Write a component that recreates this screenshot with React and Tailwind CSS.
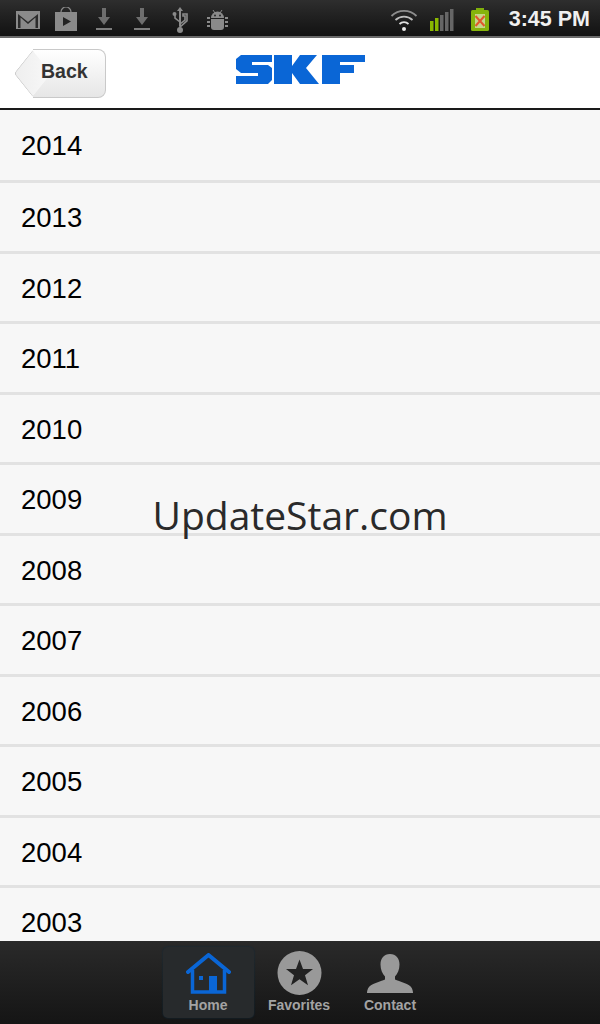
import React from 'react';

const years = [2014, 2013, 2012, 2011, 2010, 2009, 2008, 2007, 2006, 2005, 2004, 2003];

const StatusIcons = () => (
  <>
    <svg className="ml-[16px]" width="24" height="18" viewBox="0 0 24 18">
      <rect width="24" height="18" fill="#8a8a8a" />
      <path d="M2 17V3l10 8 10-8v14" fill="#2b2b2b" />
      <path d="M4.500 18V6.500L12 13l7.500-6.500V18z" fill="#8a8a8a" />
    </svg>
    <svg className="ml-[15px] mt-[-2px]" width="22" height="24" viewBox="0 0 22 24">
      <path d="M6 7V5a5 5 0 0 1 10 0v2" fill="none" stroke="#8a8a8a" strokeWidth="1.200" />
      <rect y="5" width="22" height="19" fill="#8a8a8a" />
      <path d="M8 10l8 4.500-8 4.500z" fill="#222" />
    </svg>
    <svg className="ml-[19px]" width="16" height="23" viewBox="0 0 16 23">
      <path d="M6 0h4v9h4l-6 8-6-8h4z" fill="#6e6e6e" />
      <rect y="20" width="16" height="2" fill="#7d7d7d" />
    </svg>
    <svg className="ml-[22px]" width="16" height="23" viewBox="0 0 16 23">
      <path d="M6 0h4v9h4l-6 8-6-8h4z" fill="#6e6e6e" />
      <rect y="20" width="16" height="2" fill="#7d7d7d" />
    </svg>
    <svg className="ml-[22px]" width="16" height="26" viewBox="0 0 16 26">
      <path d="M8 0l3 4H9v15H7V4H5z" fill="#8a8a8a" />
      <path d="M8 17l5-4V9h-2V7h4v6.800L8 20zM8 15L3 11V8" fill="none" stroke="#8a8a8a" strokeWidth="1.600" />
      <circle cx="8" cy="23" r="3" fill="#8a8a8a" />
      <circle cx="2.500" cy="7" r="2" fill="#8a8a8a" />
    </svg>
    <svg className="ml-[19px]" width="21" height="20" viewBox="0 0 21 20">
      <path d="M6 0l2 3M15 0l-2 3" stroke="#8a8a8a" strokeWidth="1" />
      <path d="M4 8a6.500 6.500 0 0 1 13 0z" fill="#8a8a8a" />
      <path d="M4 9h13v8a3 3 0 0 1-3 3H7a3 3 0 0 1-3-3z" fill="#8a8a8a" />
      <path d="M0 7h3v2H0zM0 11h3v2H0zM0 15h3v2H0zM18 7h3v2h-3zM18 11h3v2h-3zM18 15h3v2h-3z" fill="#8a8a8a" />
      <circle cx="8" cy="5.500" r="1" fill="#2a2a2a" />
      <circle cx="13" cy="5.500" r="1" fill="#2a2a2a" />
    </svg>
    <div className="flex-1" />
    <svg width="28" height="22" viewBox="0 0 28 22">
      <path d="M1.500 7a18 18 0 0 1 25 0" fill="none" stroke="#8d8d8d" strokeWidth="1.800" />
      <path d="M5.500 11a12.500 12.500 0 0 1 17 0" fill="none" stroke="#bdbdbd" strokeWidth="1.800" />
      <path d="M9.500 15a6.500 6.500 0 0 1 9 0" fill="none" stroke="#e0e0e0" strokeWidth="1.800" />
      <circle cx="14" cy="20" r="2" fill="#e8e8e8" />
    </svg>
    <svg className="ml-[12px]" width="24" height="22" viewBox="0 0 24 22">
      <rect x="0" y="12" width="3.500" height="10" fill="#8ab800" />
      <rect x="5" y="9" width="3.500" height="13" fill="#8ab800" />
      <rect x="10" y="6" width="3.500" height="16" fill="#666" />
      <rect x="15" y="3" width="3.500" height="19" fill="#666" />
      <rect x="20" y="0" width="3.500" height="22" fill="#666" />
    </svg>
    <svg className="ml-[17px] mt-[-1px]" width="18" height="23" viewBox="0 0 18 23">
      <rect x="5" y="0" width="8" height="3" fill="#7fae0a" />
      <rect y="2" width="18" height="21" rx="1.500" fill="#86b40c" />
      <rect x="4" y="6" width="10" height="14" fill="#c6d68a" />
      <path d="M4.500 8l9 10M13.500 8l-9 10" stroke="#e2572b" strokeWidth="2" />
    </svg>
    <span className="ml-[20px] mr-[10px] text-[21.500px] font-bold leading-none text-[#f0f0f0]">3:45 PM</span>
  </>
);

const BackButton = () => (
  <div className="relative ml-[33px] mt-[1px] flex h-[49px] w-[73px] items-center rounded-r-[8px] border border-l-0 border-[#c9c9c9] bg-gradient-to-b from-white to-[#e6e6e6]">
    <div className="absolute left-[-17px] top-[7px] h-[33px] w-[33px] rounded-bl-[4px] border-b border-l border-[#c9c9c9] bg-gradient-to-tr from-[#eeeeee] to-[#f8f8f8] [transform:scaleX(0.8)_rotate(45deg)]" />
    <span className="relative ml-[8px] mt-[-4px] text-[19.500px] font-bold leading-none text-[#333]">Back</span>
  </div>
);

const SkfLogo = () => (
  <svg width="129" height="29" viewBox="0 0 129 29" fill="#0a66d6">
    <path d="M5 0h31v7H16v3h16l4 3v12l-4 4H0v-8h22v-3H5l-5-4V4z" />
    <path d="M38 0h18v11l8-11h17L70 13l13 16H64L56 18v11H38z" />
    <path d="M86 0h43v7h-25v3h14v8h-14v11H86z" />
  </svg>
);

const HomeIcon = () => (
  <svg width="45" height="41" viewBox="0 0 45 41">
    <path d="M2 19L22.500 2 43 19" fill="none" stroke="#0a66d6" strokeWidth="4" strokeLinejoin="round" strokeLinecap="round" />
    <path d="M6.500 17v22h32V17" fill="none" stroke="#0a66d6" strokeWidth="3.500" />
    <rect x="23" y="23" width="8" height="17" fill="#0a66d6" />
    <rect x="13" y="23" width="4" height="4" fill="#0a66d6" />
  </svg>
);

const FavoritesIcon = () => (
  <svg width="45" height="44" viewBox="0 0 45 44">
    <circle cx="22.500" cy="22" r="22" fill="#999" />
    <path d="M22.500 8.500l3.500 9.500h10l-8 6.200 3 10-8.500-6-8.500 6 3-10-8-6.200h10z" fill="#222" />
  </svg>
);

const ContactIcon = () => (
  <svg width="46" height="39" viewBox="0 0 46 39">
    <path d="M23 0c6 0 9.500 4.500 9.500 10.500 0 5-2 9.500-4.500 12v3c4 2 15 4 17 9 .6 1.800 1 3 1 4.500H0c0-1.500.4-2.700 1-4.500 2-5 13-7 17-9v-3c-2.500-2.500-4.500-7-4.500-12C13.500 4.500 17 0 23 0z" fill="#999" />
  </svg>
);

const tabs = [
  { label: 'Home', icon: <HomeIcon /> },
  { label: 'Favorites', icon: <FavoritesIcon /> },
  { label: 'Contact', icon: <ContactIcon /> },
];

const App = () => {
  return (
    <div className="relative flex h-[1024px] w-[600px] flex-col overflow-hidden bg-[#f7f7f7] font-['Liberation_Sans',Arial,sans-serif]">
      {/* Status bar */}
      <div className="flex h-[38px] shrink-0 items-center border-b-2 border-[#6a6a6a] bg-gradient-to-b from-[#2e2e2e] to-[#121212] pt-[3px]">
        <StatusIcons />
      </div>

      {/* Header */}
      <div className="relative flex h-[72px] shrink-0 items-center border-b-2 border-[#1a1a1a] bg-white">
        <BackButton />
        <div className="absolute left-[236px] top-[17px]">
          <SkfLogo />
        </div>
      </div>

      {/* Year list */}
      <div className="min-h-0 flex-1 overflow-hidden">
        {years.map((year, i) => (
          <div
            key={year}
            className={`flex items-center border-b-[3px] border-[#e2e2e2] bg-[#f7f7f7] pl-[21px] text-[27.500px] leading-none text-black ${i === 0 ? 'h-[73px] pt-[1px]' : 'h-[70.5px] pt-[2px]'}`}
          >
            {year}
          </div>
        ))}
      </div>

      {/* Tab bar */}
      <div className="flex h-[83px] shrink-0 justify-center bg-gradient-to-b from-[#2a2a2a] to-[#151515] pr-[2px]">
        {tabs.map((tab, i) => (
          <div
            key={tab.label}
            className={`mt-[6px] flex h-[71px] w-[91px] flex-col items-center rounded-[5px] pt-[4px] ${i === 0 ? 'bg-[#272a2c] shadow-[0_0_2px_#0f2a3f]' : ''}`}
          >
            <div className="flex h-[44px] items-center">{tab.icon}</div>
            <span className="mt-[2px] text-[14px] font-bold leading-[16px] text-[#a3a3a3]">{tab.label}</span>
          </div>
        ))}
      </div>

      {/* Watermark */}
      <div className="absolute left-0 right-0 top-[490px] text-center font-['Open_Sans',sans-serif] text-[39px] leading-[50px] text-[#2a2a2a]">
        UpdateStar.com
      </div>
    </div>
  );
};

export default App;
